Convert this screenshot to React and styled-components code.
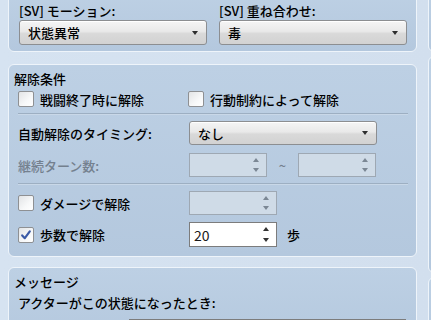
import React from "react";
import styled, { createGlobalStyle } from "styled-components";

const Global = createGlobalStyle`
  html, body { margin: 0; padding: 0; }
  body {
    width: 431px;
    height: 320px;
    overflow: hidden;
    background: #d4e1ef;
    font-family: "Noto Sans CJK JP", "Noto Sans", sans-serif;
    font-size: 13px;
    font-weight: 500;
    color: #000;
  }
`;

const Page = styled.div`
  display: flex;
  gap: 11px;
  padding-left: 8px;
  margin-top: -7px;
  height: 340px;
  overflow: hidden;
  background: linear-gradient(90deg, #d6e3f1 0%, #d2dfee 100%);
`;

const Column = styled.div`
  display: flex;
  flex-direction: column;
  flex-shrink: 0;
  width: ${(p) => p.$w}px;
`;

const Panel = styled.section`
  box-sizing: border-box;
  flex-shrink: 0;
  border: 1px solid #eef4fa;
  border-radius: 6px;
  background: linear-gradient(180deg, #bdd0e4 0%, #b4c8de 100%);
  padding: ${(p) => p.$pad || "0"};
  margin-top: ${(p) => p.$mt || 0}px;
  height: ${(p) => (p.$h ? `${p.$h}px` : "auto")};
`;

const TwoCols = styled.div`
  display: grid;
  grid-template-columns: 188px 188px;
  column-gap: 12px;
`;

const Field = styled.div`
  display: flex;
  flex-direction: column;
  gap: 1px;
`;

const Label = styled.div`
  line-height: 17px;
  height: 17px;
  white-space: nowrap;
  margin-top: ${(p) => p.$mt || 0}px;
  color: ${(p) => (p.$disabled ? "#74808e" : "#000")};
`;

const Title = styled.div`
  line-height: 17px;
  height: 17px;
  white-space: nowrap;
`;

const Body = styled.div`
  padding-left: 4px;
`;

const Select = styled.div`
  box-sizing: border-box;
  display: flex;
  align-items: center;
  justify-content: space-between;
  width: ${(p) => p.$w || 188}px;
  height: ${(p) => p.$h || 24}px;
  padding: 0 8px 0 8px;
  border: 1px solid #8c8e91;
  border-radius: 3px;
  background: linear-gradient(180deg, #f5f5f5 0%, #e9e9e9 45%, #d9d9d9 55%, #d2d2d2 100%);
  box-shadow: inset 0 1px 0 #ffffff;
  white-space: nowrap;
`;

const Caret = styled.span`
  width: 0;
  height: 0;
  border-left: 3.5px solid transparent;
  border-right: 3.5px solid transparent;
  border-top: 4px solid #2e2e2e;
`;

const Row = styled.div`
  display: grid;
  grid-template-columns: 171px auto;
  align-items: center;
  height: ${(p) => p.$h || 24}px;
  margin-top: ${(p) => p.$mt || 0}px;
`;

const Controls = styled.div`
  display: flex;
  align-items: center;
`;

const CheckRow = styled.div`
  display: grid;
  grid-template-columns: 170px auto;
  align-items: center;
  height: 20px;
  margin-top: ${(p) => p.$mt || 0}px;
`;

const CheckItem = styled.label`
  display: flex;
  align-items: center;
  gap: 6px;
  white-space: nowrap;
  line-height: 17px;
`;

const Box = styled.span`
  box-sizing: border-box;
  display: inline-flex;
  align-items: center;
  justify-content: center;
  width: 16px;
  height: 16px;
  border: 1px solid #8e9093;
  border-radius: 2px;
  background: linear-gradient(135deg, #e2e4e6 0%, #f7f8f9 60%, #ffffff 100%);
  flex-shrink: 0;
`;

const Separator = styled.div`
  height: 1px;
  background: #9dafc2;
  border-bottom: 1px solid #c9d8e8;
  margin-top: ${(p) => p.$mt || 0}px;
`;

const Spin = styled.div`
  box-sizing: border-box;
  position: relative;
  display: flex;
  align-items: center;
  width: ${(p) => p.$w}px;
  height: ${(p) => p.$h || 24}px;
  padding-left: 4px;
  border: 1px solid ${(p) => (p.$disabled ? "#9ea8b3" : "#7c7c7c")};
  background: ${(p) => (p.$disabled ? "#cfdbe7" : "#ffffff")};
  font-size: 14px;
  font-weight: 400;
  color: #1a1a1a;
`;

const Arrows = styled.div`
  position: absolute;
  right: 7px;
  top: 4px;
  bottom: 4px;
  display: flex;
  flex-direction: column;
  justify-content: space-between;
`;

const Arrow = styled.span`
  width: 0;
  height: 0;
  border-left: 3.5px solid transparent;
  border-right: 3.5px solid transparent;
  ${(p) => (p.$up ? "border-bottom" : "border-top")}: 4px solid ${(p) =>
    p.$disabled ? "#7b8794" : "#333"};
`;

const Tilde = styled.span`
  width: 31px;
  text-align: center;
  color: #74808e;
`;

const Unit = styled.span`
  margin-left: 10px;
`;

const MsgRow = styled.div`
  display: grid;
  grid-template-columns: 104px 277px;
  align-items: center;
  padding-left: 11px;
  margin-top: 8px;
  height: 24px;
  white-space: nowrap;
`;

const TextInput = styled.div`
  box-sizing: border-box;
  height: 24px;
  border: 1px solid #7c7c7c;
  background: #fff;
  padding-left: 4px;
  line-height: 22px;
`;

function Check({ checked, children }) {
  return (
    <CheckItem>
      <Box>
        {checked && (
          <svg width="12" height="12" viewBox="0 0 12 12">
            <path
              d="M2.2 6.4 L4.8 9.2 L9.8 2.4"
              fill="none"
              stroke="#3a5aa6"
              strokeWidth="2.2"
              strokeLinecap="round"
              strokeLinejoin="round"
            />
          </svg>
        )}
      </Box>
      {children}
    </CheckItem>
  );
}

function Dropdown({ value, w, h }) {
  return (
    <Select $w={w} $h={h}>
      <span>{value}</span>
      <Caret />
    </Select>
  );
}

function SpinBox({ w, value, disabled, h }) {
  return (
    <Spin $w={w} $h={h} $disabled={disabled}>
      {value}
      <Arrows>
        <Arrow $up $disabled={disabled} />
        <Arrow $disabled={disabled} />
      </Arrows>
    </Spin>
  );
}

export default function App() {
  return (
    <>
      <Global />
      <Page>
        <Column $w={409}>
          <Panel $pad="8px 10px 6px 10px">
            <TwoCols>
              <Field>
                <Label>[SV] モーション:</Label>
                <Dropdown value="状態異常" h={25} />
              </Field>
              <Field>
                <Label>[SV] 重ね合わせ:</Label>
                <Dropdown value="毒" h={25} />
              </Field>
            </TwoCols>
          </Panel>

          <Panel $mt={12} $pad="5px 8px 9px 5px">
            <Title>解除条件</Title>
            <Body>
              <CheckRow $mt={2}>
                <Check>戦闘終了時に解除</Check>
                <Check>行動制約によって解除</Check>
              </CheckRow>
              <Separator $mt={4} />
              <Row $mt={6}>
                <Label>自動解除のタイミング:</Label>
                <Dropdown value="なし" />
              </Row>
              <Row $mt={8}>
                <Label $disabled>継続ターン数:</Label>
                <Controls>
                  <SpinBox w={78} disabled />
                  <Tilde>~</Tilde>
                  <SpinBox w={78} disabled />
                </Controls>
              </Row>
              <Separator $mt={6} />
              <Row $mt={6}>
                <Check>ダメージで解除</Check>
                <Controls>
                  <SpinBox w={88} disabled />
                </Controls>
              </Row>
              <Row $mt={7} $h={25}>
                <Check checked>歩数で解除</Check>
                <Controls>
                  <SpinBox w={88} h={25} value="20" />
                  <Unit>歩</Unit>
                </Controls>
              </Row>
            </Body>
          </Panel>

          <Panel $mt={10} $pad="5px 8px 0 5px" $h={80}>
            <Title>メッセージ</Title>
            <Body>
              <Label $mt={4}>アクターがこの状態になったとき:</Label>
            </Body>
            <MsgRow>
              <span>（対象者の名前）</span>
              <TextInput>は毒にかかった！</TextInput>
            </MsgRow>
          </Panel>
        </Column>

        <Column $w={300}>
          <Panel $h={59} />
          <Panel $mt={4} $h={217} />
          <Panel $mt={4} $h={80} />
        </Column>
      </Page>
    </>
  );
}
